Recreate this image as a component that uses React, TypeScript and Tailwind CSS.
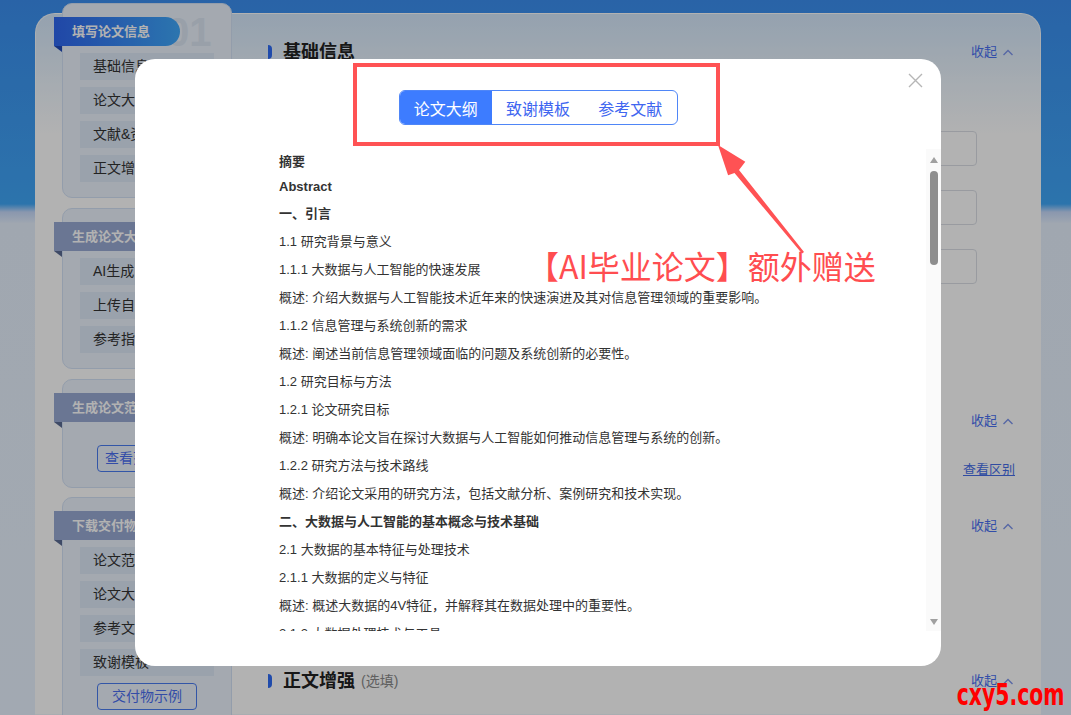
import React from 'react'

type Line = { t: string; b?: boolean; h?: string }

const outline: Line[] = [
  { t: '摘要', b: true, h: 'h-[25px]' },
  { t: 'Abstract', b: true, h: 'h-[26px]' },
  { t: '一、引言', b: true },
  { t: '1.1 研究背景与意义' },
  { t: '1.1.1 大数据与人工智能的快速发展' },
  { t: '概述: 介绍大数据与人工智能技术近年来的快速演进及其对信息管理领域的重要影响。' },
  { t: '1.1.2 信息管理与系统创新的需求' },
  { t: '概述: 阐述当前信息管理领域面临的问题及系统创新的必要性。' },
  { t: '1.2 研究目标与方法' },
  { t: '1.2.1 论文研究目标' },
  { t: '概述: 明确本论文旨在探讨大数据与人工智能如何推动信息管理与系统的创新。' },
  { t: '1.2.2 研究方法与技术路线' },
  { t: '概述: 介绍论文采用的研究方法，包括文献分析、案例研究和技术实现。' },
  { t: '二、大数据与人工智能的基本概念与技术基础', b: true },
  { t: '2.1 大数据的基本特征与处理技术' },
  { t: '2.1.1 大数据的定义与特征' },
  { t: '概述: 概述大数据的4V特征，并解释其在数据处理中的重要性。' },
  { t: '2.1.2 大数据处理技术与工具' },
  { t: '概述: 介绍Hadoop、Spark等主流大数据处理框架及其应用场景。' },
]

function Fold({ dark }: { dark: string }) {
  return (
    <svg className="absolute left-0 top-full" width="8" height="6" viewBox="0 0 8 6">
      <polygon points="0,0 8,0 8,6" fill={dark} />
    </svg>
  )
}

function Ribbon({ title, active }: { title: string; active?: boolean }) {
  if (active) {
    return (
      <div className="relative -ml-[9px] h-[29px] w-[126px] rounded-r-full bg-[linear-gradient(90deg,#2f66f0,#3fa8fb)] pl-[18px] text-[13px] font-bold leading-[29px] text-white">
        {title}
        <Fold dark="#1f48b8" />
      </div>
    )
  }
  return (
    <div className="relative -ml-[9px] h-[29px] w-[190px] bg-[#98a9d3] pl-[18px] text-[13px] font-bold leading-[29px] text-white">
      {title}
      <Fold dark="#5a6a92" />
    </div>
  )
}

function Panel({ title, items, active, button, num }: { title: string; items: string[]; active?: boolean; button?: string; num?: string }) {
  return (
    <div className="relative rounded-[10px] border border-[#d3e1f5] bg-[#ebf3fd] pb-[15px] pt-[13px]">
      {num && (
        <div className="absolute left-[104px] top-[8px] text-[40px] font-bold leading-none text-[#dbe5f2]">{num}</div>
      )}
      <Ribbon title={title} active={active} />
      {items.length > 0 && (
        <div className="mt-[7px] flex flex-col gap-[7px] px-[17px]">
          {items.map((it) => (
            <div key={it} className="h-[27px] bg-[#dde8f7] pl-[13px] text-[14px] leading-[27px] text-[#333]">
              {it}
            </div>
          ))}
        </div>
      )}
      {button && (
        <div className={items.length ? 'mt-[7px] pl-[34px]' : 'mt-[23px] pl-[34px]'}>
          <div className="flex h-[27px] w-[100px] items-center justify-center rounded-[4px] border border-[#4a7cf0] text-[14px] text-[#4a6ef0]">
            {button}
          </div>
        </div>
      )}
    </div>
  )
}

function Chevron() {
  return (
    <svg width="10" height="7" viewBox="0 0 10 7" className="ml-[6px]">
      <polyline points="0.5,6 5,1.5 9.5,6" fill="none" stroke="#7d95ec" strokeWidth="1.4" />
    </svg>
  )
}

function SectionHead({ title, note }: { title: string; note?: string }) {
  return (
    <div className="flex h-[24px] items-center justify-between">
      <div className="flex items-center">
        <div className="h-[14px] w-[4px] rounded-r-full bg-[#2f6cf5]" />
        <span className="ml-[11px] text-[18px] font-bold text-[#222]">{title}</span>
        {note && <span className="ml-[6px] text-[14px] text-[#8a8a8a]">{note}</span>}
      </div>
      <div className="flex items-center text-[13px] text-[#4a70f2]">
        收起
        <Chevron />
      </div>
    </div>
  )
}

export default function App() {
  return (
    <div className="relative h-[715px] w-full overflow-hidden bg-[linear-gradient(180deg,#3b8ff0_0px,#40a6f7_204px,#c6d9fa_212px,#e6f0fd_224px,#e9f3ff_100%)] font-['Liberation_Sans','Noto_Sans_CJK_SC',sans-serif]">
      <div className="ml-[35px] mt-[13px] flex h-[702px] w-[1006px] rounded-t-[20px] border border-white/70 bg-[linear-gradient(180deg,#d5e8fb_0px,#eef6fe_70px,#ffffff_120px)]">
        <div className="-mt-[11px] ml-[26px] flex w-[170px] flex-col gap-[10px]">
          <Panel title="填写论文信息" active num="01" items={['基础信息', '论文大纲', '文献&资料', '正文增强']} />
          <Panel title="生成论文大纲" items={['AI生成', '上传自有大纲', '参考指定大纲']} />
          <div className="-mb-[1px]">
            <Panel title="生成论文范文" items={[]} button="查看范文示例" />
          </div>
          <Panel title="下载交付物" items={['论文范文', '论文大纲', '参考文献', '致谢模板']} button="交付物示例" />
        </div>

        <div className="flex-1 pl-[36px] pr-[27px] pt-[26px]">
          <SectionHead title="基础信息" />
          <div className="mt-[67px] flex flex-col gap-[24px] pr-[36px]">
            {['论文题目', '专业名称', '学历层次'].map((l) => (
              <div key={l} className="flex items-center">
                <div className="w-[110px] text-right text-[14px] text-[#333]">{l}</div>
                <div className="ml-[16px] h-[35px] flex-1 rounded-[4px] border border-[#dcdfe6]" />
              </div>
            ))}
          </div>
          <div className="mt-[125px]">
            <SectionHead title="论文大纲" />
          </div>
          <div className="-mr-[2px] mt-[27px] flex h-[20px] items-center justify-end">
            <span className="text-[13px] text-[#466ee8] underline">查看区别</span>
          </div>
          <div className="mt-[34px]">
            <SectionHead title="文献&资料" />
          </div>
          <div className="mt-[131px]">
            <SectionHead title="正文增强" note="(选填)" />
          </div>
        </div>
      </div>

      <div className="absolute inset-0 bg-black/30" />

      <div className="absolute left-[135px] top-[59px] flex h-[607px] w-[806px] flex-col overflow-hidden rounded-[20px] bg-white">
        <svg className="absolute right-[18px] top-[14px]" width="15" height="15" viewBox="0 0 15 15">
          <path d="M1 1L14 14M14 1L1 14" stroke="#b6b6b6" strokeWidth="1.4" />
        </svg>
        <div className="mx-auto mt-[31px] flex h-[35px] w-[279px] overflow-hidden rounded-[6px] border border-[#4f86f7] font-['Noto_Sans_CJK_SC',sans-serif] text-[16px]">
          <div className="flex flex-1 items-center justify-center bg-[#3d7cff] text-white">论文大纲</div>
          <div className="flex flex-1 items-center justify-center text-[#4066f0]">致谢模板</div>
          <div className="flex flex-1 items-center justify-center text-[#4066f0]">参考文献</div>
        </div>
        <div className="mt-[24px] flex h-[482px]">
          <div className="flex-1 overflow-hidden pl-[144px]">
            {outline.map((l, i) => (
              <div
                key={i}
                className={`${l.h ?? 'h-[28px]'} flex items-center whitespace-nowrap text-[13px] text-[#333] ${l.b ? 'font-bold' : ''}`}
              >
                {l.t}
              </div>
            ))}
          </div>
          <div className="flex w-[15px] flex-col items-center bg-[#fafafa] pb-[6px] pt-[8px]">
            <div className="h-0 w-0 border-x-[4px] border-b-[6px] border-x-transparent border-b-[#a0a0a0]" />
            <div className="mt-[8px] h-[94px] w-[8px] rounded-full bg-[#8e8e8e]" />
            <div className="flex-1" />
            <div className="h-0 w-0 border-x-[4px] border-t-[6px] border-x-transparent border-t-[#a0a0a0]" />
          </div>
        </div>
      </div>

      <div className="absolute left-[353px] top-[63px] h-[83px] w-[367px] border-[4px] border-[#ff5254]" />
      <svg className="absolute left-[700px] top-[135px]" width="120" height="125" viewBox="0 0 120 125">
        <polygon points="18,10 45.3,26.7 39,35 104,117 102,118.5 34.5,38 28.1,40.3" fill="#ff5254" />
      </svg>
      <div className="absolute left-[527px] top-[249px] font-['Noto_Sans_CJK_SC',sans-serif] text-[32px] leading-none text-[#ff4d50]">
        【AI毕业论文】额外赠送
      </div>
      <div className="absolute right-[6px] top-[680px] origin-right scale-x-[0.68] font-['DejaVu_Sans',sans-serif] text-[30px] font-bold leading-none text-[#ff0000]">
        cxy5.com
      </div>
    </div>
  )
}
